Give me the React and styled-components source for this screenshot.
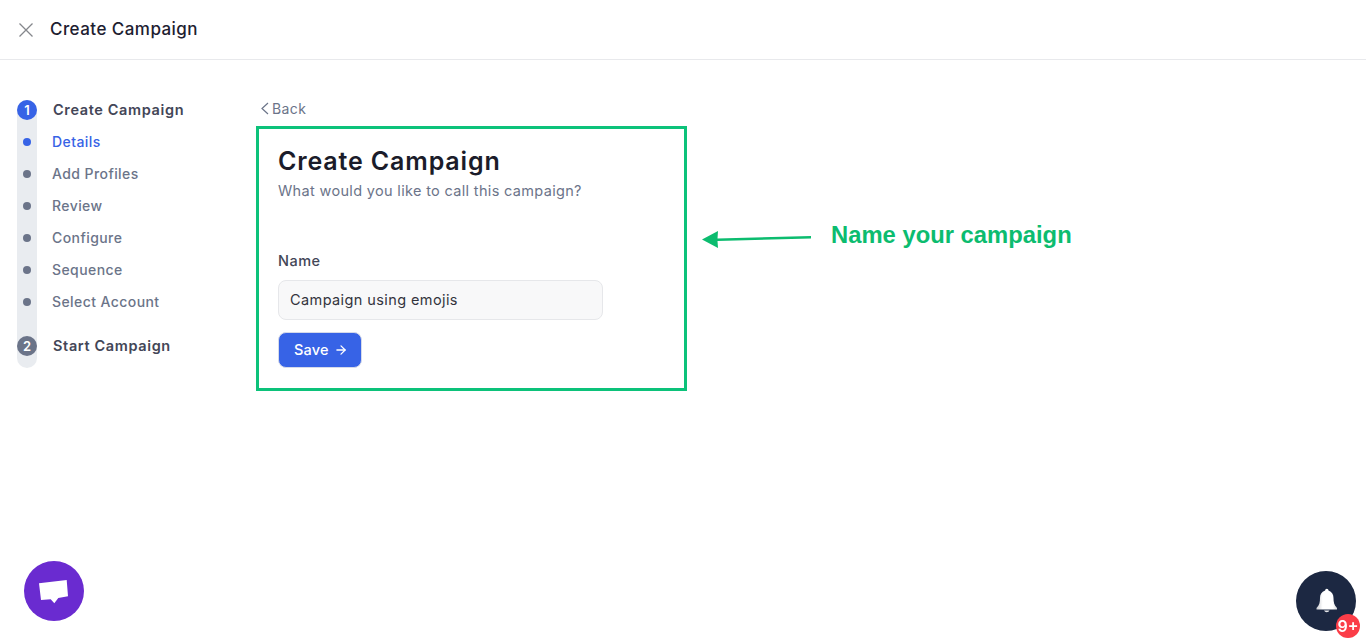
import React from "react";
import styled, { createGlobalStyle } from "styled-components";
import { ArrowRight } from "lucide-react";

const Global = createGlobalStyle`
  html, body { margin: 0; padding: 0; background: #fff; height: 100%; overflow: hidden; }
  body { font-family: "Inter", "Noto Sans", sans-serif; color: #1f2130; }
  * { box-sizing: border-box; }
`;

const Header = styled.header`
  height: 60px;
  display: flex;
  align-items: center;
  gap: 17px;
  padding-left: 19px;
  border-bottom: 1px solid #e8e9ec;
`;
const CloseIcon = styled.svg`
  display: block;
  width: 14px;
  height: 14px;
  stroke: #85878c;
  stroke-width: 1.3;
  fill: none;
`;
const HeaderTitle = styled.h1`
  margin: 0 0 1px;
  font-size: 17px;
  font-weight: 500;
  letter-spacing: 0.45px;
  color: #1d2030;
`;
const Body = styled.div`
  display: flex;
  padding: 40px 0 0 17px;
`;
const Stepper = styled.nav`
  position: relative;
  width: 239px;
  display: flex;
  flex-direction: column;
  gap: 12px;
  height: 268px;
  &::before {
    content: "";
    position: absolute;
    left: 0;
    top: 0;
    width: 20px;
    height: 268px;
    border-radius: 10px;
    background: #e9ecf0;
  }
`;
const StepRow = styled.div`
  position: relative;
  height: 20px;
  display: flex;
  align-items: center;
  margin-top: ${(p) => (p.$last ? "12px" : "0")};
`;
const StepNumber = styled.span`
  width: 20px;
  height: 20px;
  border-radius: 50%;
  flex: none;
  display: flex;
  align-items: center;
  justify-content: center;
  background: ${(p) => (p.$active ? "#3763e6" : "#6b7489")};
  color: #fff;
  font-size: 13px;
  font-weight: 600;
  margin-right: 16px;
`;
const StepTitle = styled.span`
  font-size: 14.5px;
  font-weight: 600;
  letter-spacing: 0.63px;
  color: #434657;
  padding-bottom: 2px;
`;
const DotSlot = styled.span`
  width: 20px;
  flex: none;
  display: flex;
  justify-content: center;
  margin-right: 15px;
`;
const Dot = styled.span`
  width: 8px;
  height: 8px;
  border-radius: 50%;
  background: ${(p) => (p.$active ? "#3763e6" : "#6b7489")};
`;
const SubLabel = styled.span`
  font-size: 14px;
  font-weight: 500;
  letter-spacing: 0.42px;
  color: ${(p) => (p.$active ? "#3763e6" : "#6b7489")};
  padding-bottom: 2px;
`;
const Main = styled.main`
  display: flex;
  align-items: flex-start;
`;
const Column = styled.div`
  display: flex;
  flex-direction: column;
`;
const BackLink = styled.a`
  height: 26px;
  display: flex;
  align-items: flex-start;
  gap: 3px;
  padding-left: 5px;
  font-size: 14px;
  line-height: 17px;
  letter-spacing: 0.4px;
  color: #6b7489;
`;
const BackIcon = styled.svg`
  display: block;
  width: 8px;
  height: 13px;
  margin-top: 2px;
  stroke: #6b7489;
  stroke-width: 1.2;
  fill: none;
`;
const Card = styled.section`
  width: 431px;
  height: 265px;
  border: 3px solid #0cc27a;
  padding: 17px 19px 0;
  display: flex;
  flex-direction: column;
`;
const CardTitle = styled.h2`
  margin: 0;
  font-size: 25px;
  line-height: 30px;
  font-weight: 600;
  letter-spacing: 0.85px;
  color: #1b1c2a;
`;
const CardSub = styled.p`
  margin: 5px 0 0;
  font-size: 14.5px;
  line-height: 20px;
  letter-spacing: 0.33px;
  color: #6b7489;
`;
const FieldLabel = styled.label`
  margin-top: 50px;
  font-size: 14.5px;
  line-height: 20px;
  font-weight: 500;
  letter-spacing: 0.5px;
  color: #434657;
`;
const NameInput = styled.div`
  margin-top: 9px;
  width: 325px;
  height: 40px;
  display: flex;
  align-items: center;
  padding: 0 0 1px 11px;
  background: #f8f8f9;
  border: 1px solid #e6e7ea;
  border-radius: 8px;
  font-size: 14.5px;
  letter-spacing: 0.4px;
  color: #33343d;
`;
const SaveButton = styled.button`
  margin-top: 12px;
  width: 84px;
  height: 36px;
  display: flex;
  align-items: center;
  gap: 5px;
  padding: 0 0 1px 15px;
  border: 1px solid #d5daea;
  border-radius: 8px;
  background: #3763e6;
  color: #fff;
  font: 500 14.5px "Inter", sans-serif;
  letter-spacing: 0.2px;
`;
const Annotation = styled.div`
  display: flex;
  align-items: flex-start;
  margin: 129px 0 0 14px;
`;
const AnnotationText = styled.span`
  margin: -8px 0 0 18px;
  font-family: "Liberation Sans", sans-serif;
  font-weight: 700;
  font-size: 23.8px;
  line-height: 28px;
  color: #0cbc6f;
`;
const ChatBubble = styled.div`
  position: fixed;
  left: 24px;
  top: 561px;
  width: 60px;
  height: 60px;
  border-radius: 50%;
  background: #6a2bd0;
`;
const BellButton = styled.div`
  position: fixed;
  left: 1296px;
  top: 571px;
  width: 60px;
  height: 60px;
  border-radius: 50%;
  background: #1c2842;
`;
const Badge = styled.span`
  position: absolute;
  left: 40px;
  top: 43px;
  width: 24px;
  height: 24px;
  border-radius: 50%;
  background: #fb3d48;
  color: #fff;
  font: 600 16px "Inter", sans-serif;
  display: flex;
  align-items: center;
  justify-content: center;
`;

const subSteps = ["Details", "Add Profiles", "Review", "Configure", "Sequence", "Select Account"];

export default function App() {
  return (
    <>
      <Global />
      <Header>
        <CloseIcon viewBox="0 0 14 14"><path d="M0.5 0.5 L13.5 13.5 M13.5 0.5 L0.5 13.5" /></CloseIcon>
        <HeaderTitle>Create Campaign</HeaderTitle>
      </Header>
      <Body>
        <Stepper>
          <StepRow>
            <StepNumber $active>1</StepNumber>
            <StepTitle>Create Campaign</StepTitle>
          </StepRow>
          {subSteps.map((s, i) => (
            <StepRow key={s}>
              <DotSlot><Dot $active={i === 0} /></DotSlot>
              <SubLabel $active={i === 0}>{s}</SubLabel>
            </StepRow>
          ))}
          <StepRow $last>
            <StepNumber>2</StepNumber>
            <StepTitle>Start Campaign</StepTitle>
          </StepRow>
        </Stepper>
        <Main>
          <Column>
            <BackLink>
              <BackIcon viewBox="0 0 8 13"><path d="M7 1 L1 6.5 L7 12" /></BackIcon>
              Back
            </BackLink>
            <Card>
              <CardTitle>Create Campaign</CardTitle>
              <CardSub>What would you like to call this campaign?</CardSub>
              <FieldLabel>Name</FieldLabel>
              <NameInput>Campaign using emojis</NameInput>
              <SaveButton>Save <ArrowRight size={14} strokeWidth={2.2} /></SaveButton>
            </Card>
          </Column>
          <Annotation>
            <svg width="112" height="20" viewBox="0 0 112 20">
              <path d="M1 10.5 L17 2 L16.5 9.6 L110 7 L110 9.5 L16.5 12 L17 19 Z" fill="#0cbc6f" />
            </svg>
            <AnnotationText>Name your campaign</AnnotationText>
          </Annotation>
        </Main>
      </Body>
      <ChatBubble>
        <svg width="60" height="60" viewBox="0 0 60 60">
          <path d="M15 22.3 L42.7 19 L44 35.3 L34.3 37 L30.3 42.3 L26.7 38.3 L17 39 Z" fill="#fff" />
        </svg>
      </ChatBubble>
      <BellButton>
        <svg width="60" height="60" viewBox="0 0 60 60">
          <defs>
            <linearGradient id="bellShade" x1="0" y1="0" x2="1" y2="0">
              <stop offset="0" stopColor="#c9cbd0" />
              <stop offset="0.3" stopColor="#fff" />
              <stop offset="0.8" stopColor="#fff" />
              <stop offset="1" stopColor="#d5d7da" />
            </linearGradient>
          </defs>
          <path d="M32.5 19.5 a1.7 1.7 0 0 0 -3.4 0 C25.5 21 24 23.5 24 27 C24 31 23.5 34 20.5 37 V38.5 H41 V37 C38 34 37.5 31 37.5 27 C37.5 23.5 36 21 32.5 19.5 Z" fill="url(#bellShade)" />
          <path d="M28 39.5 a3 3 0 0 0 5.5 0 Z" fill="#e8e9ec" />
        </svg>
        <Badge>9+</Badge>
      </BellButton>
    </>
  );
}
